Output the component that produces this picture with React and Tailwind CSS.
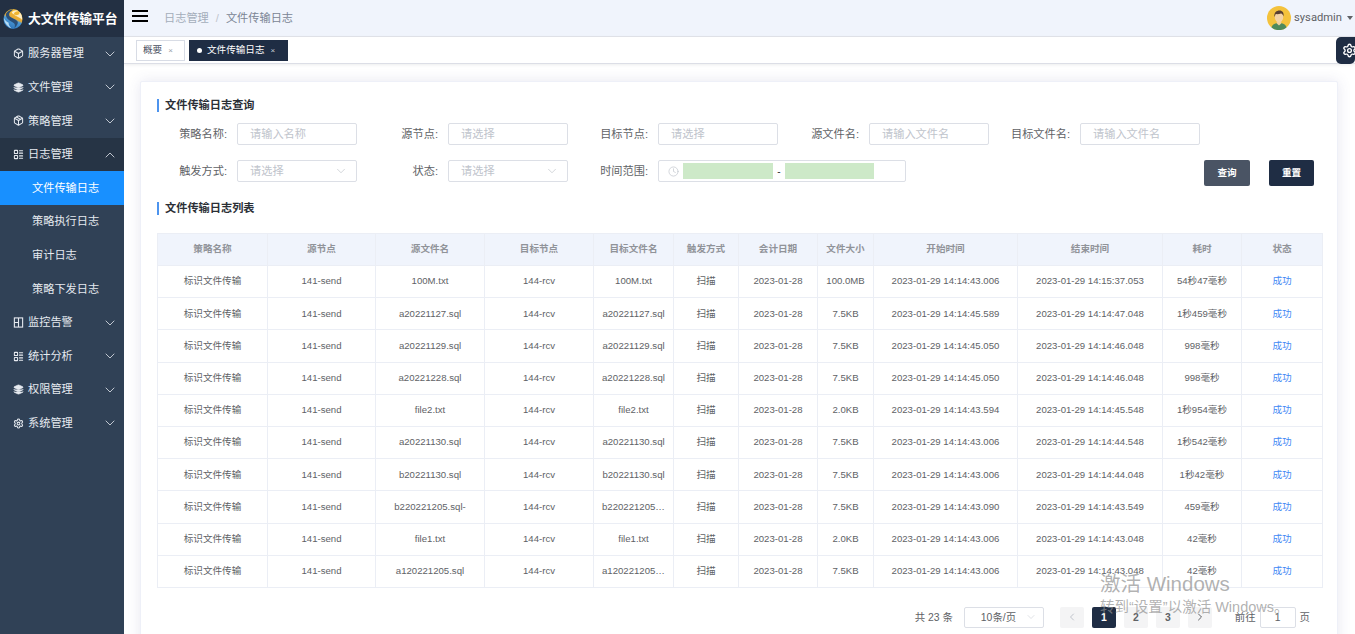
import { ChevronDown, ChevronUp, ChevronLeft, ChevronRight, Clock, Box, Layers, Package, LayoutList, Settings } from "lucide-react";

function MonitorIcon(props) {
  return (
    <svg viewBox="0 0 12 12" fill="none" stroke="currentColor" {...props} strokeWidth="1.200">
      <rect x="1.500" y="1" width="9" height="10" />
      <path d="M6 1v10M1.500 6H6" />
    </svg>
  );
}

const menu = [
  { name: "服务器管理", icon: Box },
  { name: "文件管理", icon: Layers, filled: true },
  { name: "策略管理", icon: Package },
  { name: "日志管理", icon: LayoutList, open: true },
  { name: "监控告警", icon: MonitorIcon },
  { name: "统计分析", icon: LayoutList },
  { name: "权限管理", icon: Layers, filled: true },
  { name: "系统管理", icon: Settings },
];
const subMenu = ["文件传输日志", "策略执行日志", "审计日志", "策略下发日志"];

const cols = [110, 108, 109, 109, 80, 65, 79, 56, 144, 145, 79, 81];
const heads = ["策略名称", "源节点", "源文件名", "目标节点", "目标文件名", "触发方式", "会计日期", "文件大小", "开始时间", "结束时间", "耗时", "状态"];
const rows = [
  ["100M.txt", "100M.txt", "100.0MB", "2023-01-29 14:14:43.006", "2023-01-29 14:15:37.053", "54秒47毫秒"],
  ["a20221127.sql", "a20221127.sql", "7.5KB", "2023-01-29 14:14:45.589", "2023-01-29 14:14:47.048", "1秒459毫秒"],
  ["a20221129.sql", "a20221129.sql", "7.5KB", "2023-01-29 14:14:45.050", "2023-01-29 14:14:46.048", "998毫秒"],
  ["a20221228.sql", "a20221228.sql", "7.5KB", "2023-01-29 14:14:45.050", "2023-01-29 14:14:46.048", "998毫秒"],
  ["file2.txt", "file2.txt", "2.0KB", "2023-01-29 14:14:43.594", "2023-01-29 14:14:45.548", "1秒954毫秒"],
  ["a20221130.sql", "a20221130.sql", "7.5KB", "2023-01-29 14:14:43.006", "2023-01-29 14:14:44.548", "1秒542毫秒"],
  ["b20221130.sql", "b20221130.sql", "7.5KB", "2023-01-29 14:14:43.006", "2023-01-29 14:14:44.048", "1秒42毫秒"],
  ["b220221205.sql-", "b220221205…", "7.5KB", "2023-01-29 14:14:43.090", "2023-01-29 14:14:43.549", "459毫秒"],
  ["file1.txt", "file1.txt", "2.0KB", "2023-01-29 14:14:43.006", "2023-01-29 14:14:43.048", "42毫秒"],
  ["a120221205.sql", "a120221205…", "7.5KB", "2023-01-29 14:14:43.006", "2023-01-29 14:14:43.048", "42毫秒"],
];

function Logo() {
  return (
    <svg width="20" height="22" viewBox="0 0 21 22" className="shrink-0">
      <defs>
        <linearGradient id="logoBase" x1="0.700" y1="0" x2="0.300" y2="1">
          <stop offset="0" stopColor="#f7bd2e" />
          <stop offset="0.450" stopColor="#e8ab35" />
          <stop offset="0.550" stopColor="#4b9ad8" />
          <stop offset="1" stopColor="#2a70b5" />
        </linearGradient>
      </defs>
      <ellipse cx="10.500" cy="11" rx="10" ry="10.500" fill="url(#logoBase)" />
      <path d="M3 6c1-3 5-5 8-5-3 1.500-5 3.500-4.500 6 .5 3 8 4 9 7 .5 2-1 4.500-3.500 6.500.5-2 1-3.500-.5-5C9 13 3 12 3 6z" fill="#2a4f78" />
      <path d="M9 4c2-2 5-3 8-1-3-.5-5 .5-5.500 2.500C11 8 18 8.500 20 12c.5-3-.5-6-3-8.500C19 8 11 8 9 4z" fill="#fdeec4" />
      <path d="M1 10c0 4 3 9 8 11-2-2-3.500-4-3-6-2-1-4-2.500-5-5z" fill="#b5dcf5" />
    </svg>
  );
}

function Avatar() {
  return (
    <svg width="24" height="24" viewBox="0 0 24 24" className="shrink-0">
      <circle cx="12" cy="12" r="12" fill="#f4c23c" />
      <path d="M4.500 21.500c1-3.500 4-4.500 7.500-4.500s6.500 1 7.500 4.500A12 12 0 0 1 4.500 21.500z" fill="#4f8a5b" />
      <path d="M9.800 14h4.400v3.500l-2.200 2-2.200-2z" fill="#f0cf9e" />
      <ellipse cx="12" cy="11" rx="4.300" ry="5.400" fill="#f3d3a5" />
      <path d="M7.400 10.500C7 6.500 9.500 4.500 12.500 4.500c3 0 4.600 2.200 4.100 6-.6-1.700-1.400-2.700-2.600-3-1.600.7-4 .8-5.300.6-.4.700-.7 1.500-.8 2.400z" fill="#5a4032" />
    </svg>
  );
}

function Title({ children }) {
  return <div className="border-l-2 border-[#4d94ee] pl-1.5 text-[11.2px] leading-[13px] font-bold text-[#2b2f36]">{children}</div>;
}

function Field({ label, labelW, inputW = "w-[120px]", text, arrow }) {
  return (
    <div className="flex items-center">
      <label className={`${labelW} shrink-0 pr-[10px] text-right text-[11.2px] text-[#606266]`}>{label}</label>
      <div className={`${inputW} flex h-[22px] items-center justify-between rounded-[2px] border border-[#dcdfe6] bg-white pl-3 pr-2 text-[11.2px] text-[#c0c4cc]`}>
        <span>{text}</span>
        {arrow && <ChevronDown size={14} strokeWidth={1} className="text-[#b4b8c0]" />}
      </div>
    </div>
  );
}

function PageBtn({ children, active }) {
  return (
    <div className={`flex h-[21px] w-6 items-center justify-center rounded-[2px] text-[10.4px] font-bold ${active ? "bg-[#1f2d44] text-white" : "bg-[#f4f4f5] text-[#606266]"}`}>
      {children}
    </div>
  );
}

export default function App() {
  return (
    <div className="relative flex h-screen w-full overflow-hidden bg-white font-['Liberation_Sans','Noto_Sans_CJK_SC',sans-serif]">
      <aside className="flex w-[124px] shrink-0 flex-col bg-[#304156] text-[11.2px] text-[#e6eaf0]">
        <div className="flex h-[37px] items-center gap-[5px] bg-[#233043] pl-[3px]">
          <Logo />
          <span className="text-[12.8px] font-bold whitespace-nowrap text-white">大文件传输平台</span>
        </div>
        {menu.map((m) => (
          <div key={m.name}>
            <div className={`flex h-[33.6px] items-center pl-[13px] pr-[6px] ${m.open ? "bg-[#263445]" : ""}`}>
              <m.icon width={11} height={11} strokeWidth={m.filled ? 1.500 : 2.200} fill={m.filled ? "currentColor" : "none"} className="mr-1 shrink-0" />
              <span className="flex-1">{m.name}</span>
              {m.open ? <ChevronUp size={16} strokeWidth={1.200} /> : <ChevronDown size={16} strokeWidth={1.200} />}
            </div>
            {m.open && subMenu.map((s, i) => (
              <div key={s} className={`flex h-[33.6px] items-center pl-8 ${i === 0 ? "bg-[#1890ff] text-white" : ""}`}>{s}</div>
            ))}
          </div>
        ))}
      </aside>

      <main className="flex min-w-0 flex-1 flex-col">
        <header className="flex h-[37px] shrink-0 items-center border-b border-[#e2e4ea] bg-[#f0f4fc] pr-[2px]">
          <div className="ml-[8px] flex w-4 flex-col gap-[3px] pb-1">
            <div className="h-[2px] bg-black" />
            <div className="h-[2px] bg-black" />
            <div className="h-[2px] bg-black" />
          </div>
          <div className="ml-4 flex items-center text-[11.2px]">
            <span className="text-[#a4adba]">日志管理</span>
            <span className="mx-[7px] text-[#c0c4cc]">/</span>
            <span className="text-[#7b8594]">文件传输日志</span>
          </div>
          <div className="ml-auto flex items-center gap-[3px]">
            <Avatar />
            <span className="font-['Roboto',sans-serif] text-[11.2px] text-[#606266]">sysadmin</span>
            <div className="ml-[2px] h-0 w-0 border-x-[3.5px] border-t-[4px] border-x-transparent border-t-[#606266]" />
          </div>
        </header>

        <div className="relative z-10 flex h-[27px] shrink-0 items-center gap-1 border-b border-[#dcdee6] bg-white pt-px pl-3 shadow-[0_1px_3px_rgba(0,21,41,0.08)]">
          <div className="flex h-[21px] w-[49px] items-center border border-[#d8dce5] bg-white pl-[6px] text-[9.6px] text-[#495060]">
            概要<span className="ml-[6px] text-[8px] text-[#9aa0aa]">×</span>
          </div>
          <div className="flex h-[21px] w-[99px] items-center bg-[#1f2d44] pl-2 text-[9.6px] text-white">
            <span className="mr-[5px] h-[5px] w-[5px] rounded-full bg-white" />
            文件传输日志<span className="ml-[6px] text-[8px] text-[#c6ccd6]">×</span>
          </div>
          <div className="absolute top-0 right-0 flex h-[27px] w-[19px] items-center justify-center rounded-l-[5px] rounded-b-[5px] bg-[#1f2d44]">
            <Settings size={15} strokeWidth={2.200} className="ml-2 shrink-0 text-white" />
          </div>
        </div>

        <div className="flex-1 overflow-hidden bg-white pt-[17px] pl-4 pr-[17px]">
          <section className="rounded-[2px] border border-[#eef0f8] bg-white pl-4 pr-[15px] pt-[17px] pb-10 shadow-[0_0_14px_rgba(70,70,150,0.13)]">
            <Title>文件传输日志查询</Title>
            <div className="mt-[11px] flex">
              <Field label="策略名称:" labelW="w-[80px]" text="请输入名称" />
              <Field label="源节点:" labelW="w-[91px]" text="请选择" />
              <Field label="目标节点:" labelW="w-[90px]" text="请选择" />
              <Field label="源文件名:" labelW="w-[91px]" text="请输入文件名" />
              <Field label="目标文件名:" labelW="w-[91px]" text="请输入文件名" />
            </div>
            <div className="mt-[15px] flex items-start">
              <Field label="触发方式:" labelW="w-[80px]" text="请选择" arrow />
              <Field label="状态:" labelW="w-[91px]" text="请选择" arrow />
              <div className="flex items-center">
                <label className="w-[90px] shrink-0 pr-[10px] text-right text-[11.2px] text-[#606266]">时间范围:</label>
                <div className="flex h-[22px] w-[248px] items-center rounded-[2px] border border-[#dcdfe6] bg-white pl-[9px]">
                  <Clock size={11} strokeWidth={1.500} className="mr-1 text-[#c0c4cc]" />
                  <span className="h-4 w-[90px] bg-[#cde9c8]" />
                  <span className="w-3 text-center text-[10px] text-[#303133]">-</span>
                  <span className="h-4 w-[89px] bg-[#cde9c8]" />
                </div>
              </div>
              <div className="mr-2 ml-auto flex gap-[19px]">
                <button className="h-[26px] w-[46px] rounded-[2px] bg-[#4a5464] text-[9.6px] font-bold text-white">查询</button>
                <button className="h-[26px] w-[45px] rounded-[2px] bg-[#1f2d44] text-[9.6px] font-bold text-white">重置</button>
              </div>
            </div>
            <div className="mt-4">
              <Title>文件传输日志列表</Title>
            </div>
            <table className="mt-[18px] w-[1165px] table-fixed border-collapse text-center text-[9.6px] text-[#606266]">
              <colgroup>
                {cols.map((w, i) => <col key={i} style={{ width: w }} />)}
              </colgroup>
              <thead>
                <tr className="h-[32px] bg-[#f0f4fc] text-[#909399]">
                  {heads.map((h) => <th key={h} className="border border-[#ebeef5] font-bold">{h}</th>)}
                </tr>
              </thead>
              <tbody>
                {rows.map((r) => (
                  <tr key={r[0]} className="h-[32.2px]">
                    <td className="border border-[#ebeef5]">标识文件传输</td>
                    <td className="border border-[#ebeef5]">141-send</td>
                    <td className="border border-[#ebeef5]">{r[0]}</td>
                    <td className="border border-[#ebeef5]">144-rcv</td>
                    <td className="border border-[#ebeef5]">{r[1]}</td>
                    <td className="border border-[#ebeef5]">扫描</td>
                    <td className="border border-[#ebeef5]">2023-01-28</td>
                    <td className="border border-[#ebeef5]">{r[2]}</td>
                    <td className="border border-[#ebeef5]">{r[3]}</td>
                    <td className="border border-[#ebeef5]">{r[4]}</td>
                    <td className="border border-[#ebeef5]">{r[5]}</td>
                    <td className="border border-[#ebeef5] text-[#3f88f5]">成功</td>
                  </tr>
                ))}
              </tbody>
            </table>
            <div className="mt-[19px] flex items-center justify-end pr-3 text-[10.4px] text-[#606266]">
              <span className="mr-[11px]">共 23 条</span>
              <div className="mr-4 flex h-[21px] w-[80px] items-center justify-between rounded-[2px] border border-[#dcdfe6] pl-4 pr-[6px]">
                10条/页
                <ChevronDown size={12} strokeWidth={1} className="text-[#c0c4cc]" />
              </div>
              <div className="flex gap-2">
                <PageBtn><ChevronLeft size={12} className="text-[#c0c4cc]" /></PageBtn>
                <PageBtn active>1</PageBtn>
                <PageBtn>2</PageBtn>
                <PageBtn>3</PageBtn>
                <PageBtn><ChevronRight size={12} /></PageBtn>
              </div>
              <span className="ml-[23px]">前往</span>
              <div className="mx-1 flex h-[21px] w-9 items-center justify-center rounded-[2px] border border-[#dcdfe6]">1</div>
              <span>页</span>
            </div>
          </section>
        </div>
      </main>

      <div className="pointer-events-none absolute top-[571px] left-[1100px] font-['Liberation_Sans','Noto_Sans_CJK_SC',sans-serif] whitespace-nowrap text-[#8f8f8f]/70">
        <div className="text-[20.5px] leading-[26px]">激活 Windows</div>
        <div className="text-[14.5px] leading-[21px]">转到“设置”以激活 Windows。</div>
      </div>
    </div>
  );
}
